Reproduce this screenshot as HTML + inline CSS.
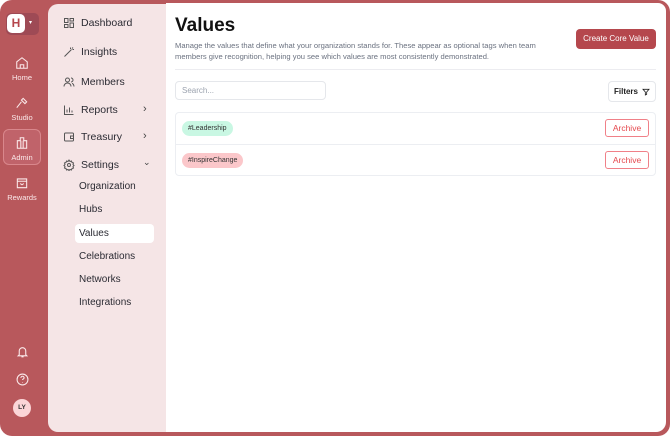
<!DOCTYPE html>
<html><head><meta charset="utf-8"><style>
*{box-sizing:border-box;margin:0;padding:0}
html,body{width:670px;height:436px;overflow:hidden;background:#fff;font-family:"Liberation Sans",sans-serif}
.frame{position:absolute;left:0;top:0;width:670px;height:436px;background:#b8585c;border-radius:12px}
.side{position:absolute;left:48px;top:4px;width:125px;height:428px;background:#f5e5e6;border-radius:10px 0 0 10px}
.main{position:absolute;left:166px;top:3px;width:500px;height:429px;background:#fff;border-radius:0 8px 10px 0}
.rail{position:absolute;left:0;top:0;width:46px;height:436px;color:#fbe9ea;font-size:7.5px;text-align:center}
.ri{position:absolute;left:3px;width:38px;text-align:center}
.ri svg{display:block;margin:0 auto 3px}
.nav{position:absolute;left:63px;font-size:10.5px;color:#2b2b33;display:flex;align-items:center}
.nav svg{margin-right:6px}
.sub{position:absolute;left:79px;font-size:10px;color:#2b2b33}
.chev{position:absolute;left:143px;font-size:11px;color:#444}
h1{position:absolute;left:175px;top:15px;font-size:19px;font-weight:bold;color:#111}
.desc{position:absolute;left:175px;top:40px;font-size:7.6px;line-height:11px;color:#6b7280;width:380px}
.btn{position:absolute;left:576px;top:29px;width:80px;height:20px;background:#b5474d;border-radius:4px;color:#fff;font-size:8px;text-align:center;line-height:20px;white-space:nowrap}
.hr{position:absolute;left:175px;top:69px;width:481px;height:1px;background:#ececf0}
.search{position:absolute;left:175px;top:81px;width:151px;height:19px;border:1px solid #e5e7eb;border-radius:4px;font-size:8px;color:#9ca3af;padding:4px 6px}
.filt{position:absolute;left:608px;top:81px;width:48px;height:21px;border:1px solid #e5e7eb;border-radius:4px;font-size:8px;color:#222;font-weight:bold;white-space:nowrap;display:flex;align-items:center;justify-content:center;gap:4px}
.list{position:absolute;left:175px;top:112px;width:481px;height:64px;border:1px solid #eceef2;border-radius:4px}
.row{position:absolute;left:0;width:479px;height:32px}
.tag{position:absolute;left:6px;top:8px;height:15px;border-radius:8px;font-size:7px;color:#333;padding:3.5px 6px}
.arc{position:absolute;right:6px;top:6px;width:44px;height:18px;border:1px solid #f08088;border-radius:3px;color:#e5484d;font-size:8.5px;text-align:center;line-height:16px}
</style></head><body>
<div class="frame"></div>
<div class="rail">
 <div style="position:absolute;left:6px;top:13px;width:33px;height:22px;background:#9e4a55;border-radius:5px"></div>
 <div style="position:absolute;left:7px;top:14px;width:18px;height:19px;background:#fff;border-radius:5px;color:#b5474d;font-weight:bold;font-size:12px;line-height:19px;text-align:center">H</div>
 <div style="position:absolute;left:29px;top:19px;font-size:6px;color:#fff">▾</div>
 <div class="ri" style="top:56px"><svg width="14" height="14" viewBox="0 0 24 24" fill="none" stroke="#fbe9ea" stroke-width="1.8"><path d="M3 10l9-7 9 7v11H3z M9 21v-6h6v6"/></svg>Home</div>
 <div class="ri" style="top:96px"><svg width="14" height="14" viewBox="0 0 24 24" fill="none" stroke="#fbe9ea" stroke-width="1.8"><path d="M14 4l6 6-3 3-6-6z M11 10L3 20"/></svg>Studio</div>
 <div style="position:absolute;left:3px;top:129px;width:38px;height:36px;background:#c0636a;border:1px solid #d9878c;border-radius:6px"></div>
 <div class="ri" style="top:136px"><svg width="14" height="14" viewBox="0 0 24 24" fill="none" stroke="#fbe9ea" stroke-width="1.8"><path d="M4 21V8h5V3h6v5h5v13z M10 8v13 M14 8v13"/></svg>Admin</div>
 <div class="ri" style="top:176px"><svg width="14" height="14" viewBox="0 0 24 24" fill="none" stroke="#fbe9ea" stroke-width="1.8"><path d="M4 5h16v15H4z M4 9h16 M9 13l3 2 3-2"/></svg>Rewards</div>
 <div class="ri" style="top:345px"><svg width="13" height="14" viewBox="0 0 24 24" fill="none" stroke="#fbe9ea" stroke-width="2"><path d="M6 17V10a6 6 0 0112 0v7l2 2H4z M10 21h4"/></svg></div>
 <div class="ri" style="top:373px"><svg width="13" height="13" viewBox="0 0 24 24" fill="none" stroke="#fbe9ea" stroke-width="2"><circle cx="12" cy="12" r="10"/><path d="M9 9a3 3 0 116 0c0 2-3 2-3 4 M12 17v1"/></svg></div>
 <div style="position:absolute;left:13px;top:399px;width:18px;height:18px;border-radius:50%;background:#fbd5d7;color:#333;font-size:6.5px;font-weight:bold;line-height:18px;text-align:center">LY</div>
</div>
<div class="side"></div>
<div class="main"></div>
<div class="nav" style="top:17px"><svg width="12" height="12" viewBox="0 0 24 24" fill="none" stroke="#555" stroke-width="2"><rect x="3" y="3" width="7" height="8"/><rect x="14" y="3" width="7" height="5"/><rect x="3" y="15" width="7" height="6"/><rect x="14" y="12" width="7" height="9"/></svg>Dashboard</div>
<div class="nav" style="top:46px"><svg width="12" height="12" viewBox="0 0 24 24" fill="none" stroke="#555" stroke-width="2"><path d="M3 21L17 7 M15 3v3 M19 7h3 M20 3l-2 2"/></svg>Insights</div>
<div class="nav" style="top:76px"><svg width="12" height="12" viewBox="0 0 24 24" fill="none" stroke="#555" stroke-width="2"><circle cx="9" cy="8" r="4"/><path d="M2 21c0-4 3-7 7-7s7 3 7 7 M16 4a4 4 0 010 8 M22 21c0-3-2-6-4-6"/></svg>Members</div>
<div class="nav" style="top:104px"><svg width="12" height="12" viewBox="0 0 24 24" fill="none" stroke="#555" stroke-width="2"><path d="M3 3v18h18 M8 17v-6 M13 17V7 M18 17v-4"/></svg>Reports</div>
<div class="chev" style="top:103px">›</div>
<div class="nav" style="top:131px"><svg width="12" height="12" viewBox="0 0 24 24" fill="none" stroke="#555" stroke-width="2"><rect x="3" y="4" width="18" height="16" rx="2"/><path d="M15 10h6v5h-6z"/></svg>Treasury</div>
<div class="chev" style="top:130px">›</div>
<div class="nav" style="top:159px"><svg width="12" height="12" viewBox="0 0 24 24" fill="none" stroke="#555" stroke-width="2"><circle cx="12" cy="12" r="3"/><path d="M12 2l2 3 3-1 1 3 3 1-1 3 2 2-2 2 1 3-3 1-1 3-3-1-2 2-2-2-3 1-1-3-3-1 1-3-2-2 2-2-1-3 3-1 1-3 3 1z"/></svg>Settings</div>
<div class="chev" style="top:157px;font-size:9px">⌄</div>
<div class="sub" style="top:181px">Organization</div>
<div class="sub" style="top:204px">Hubs</div>
<div style="position:absolute;left:75px;top:224px;width:79px;height:19px;background:#fff;border-radius:4px"></div>
<div class="sub" style="top:228px">Values</div>
<div class="sub" style="top:251px">Celebrations</div>
<div class="sub" style="top:274px">Networks</div>
<div class="sub" style="top:297px">Integrations</div>

<h1>Values</h1>
<div class="desc">Manage the values that define what your organization stands for. These appear as optional tags when team members give recognition, helping you see which values are most consistently demonstrated.</div>
<div class="btn">Create Core Value</div>
<div class="hr"></div>
<div class="search">Search...</div>
<div class="filt"><span>Filters</span><svg width="8" height="8" viewBox="0 0 24 24" fill="none" stroke="#222" stroke-width="2.5"><path d="M3 4h18l-7 8v7l-4 2v-9z"/></svg></div>
<div class="list">
 <div class="row" style="top:0;border-bottom:1px solid #eceef2"><div class="tag" style="background:#c9f7e3">#Leadership</div><div class="arc">Archive</div></div>
 <div class="row" style="top:32px"><div class="tag" style="background:#fbc7ca">#InspireChange</div><div class="arc">Archive</div></div>
</div>
</body></html>
